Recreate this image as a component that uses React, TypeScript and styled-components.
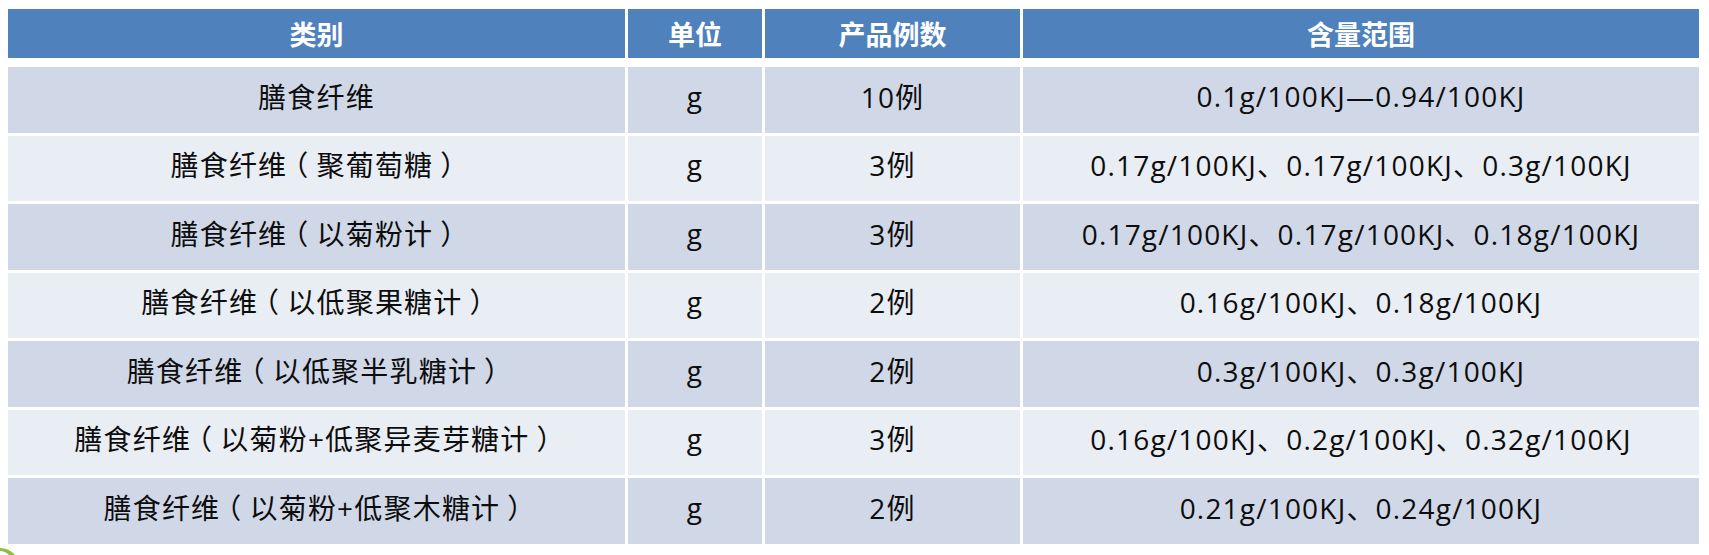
import React from "react";
import styled, { createGlobalStyle } from "styled-components";

const Global = createGlobalStyle`
  html, body { margin: 0; padding: 0; background: #ffffff; }
  body { width: 1709px; height: 555px; overflow: hidden; position: relative; }
`;

const Page = styled.div`
  padding: 9px 0 0 8px;
  font-family: "Open Sans", "Noto Sans CJK SC", sans-serif;
`;

const Table = styled.div`
  width: 1691px;
  display: grid;
  grid-template-columns: 617px 134px 255px 1fr;
  column-gap: 3px;
  row-gap: 3px;
`;

const HeadCell = styled.div`
  background: #4f81bd;
  height: 49px;
  margin-bottom: 6px;
  display: flex;
  align-items: center;
  justify-content: center;
  color: #ffffff;
  font-family: "Noto Sans CJK SC", sans-serif;
  font-weight: 700;
  font-size: 27px;
`;

const Cell = styled.div<{ $alt: boolean }>`
  background: ${(p) => (p.$alt ? "#e9edf4" : "#d0d8e8")};
  height: 65.5px;
  box-sizing: border-box;
  padding-bottom: 8px;
  display: flex;
  align-items: center;
  justify-content: center;
  color: #0d0d0d;
  font-size: 28px;
  letter-spacing: 1.2px;
  white-space: nowrap;
`;

const Paren = styled.span`
  font-family: "Noto Sans CJK SC", sans-serif;
  font-feature-settings: "halt";
  padding: 0 0.25em;
`;

const Leaf = styled.svg`
  position: absolute;
  left: 0;
  bottom: 0;
`;

const headers = ["类别", "单位", "产品例数", "含量范围"];

const rows: string[][] = [
  ["膳食纤维", "g", "10例", "0.1g/100KJ—0.94/100KJ"],
  ["膳食纤维（聚葡萄糖）", "g", "3例", "0.17g/100KJ、0.17g/100KJ、0.3g/100KJ"],
  ["膳食纤维（以菊粉计）", "g", "3例", "0.17g/100KJ、0.17g/100KJ、0.18g/100KJ"],
  ["膳食纤维（以低聚果糖计）", "g", "2例", "0.16g/100KJ、0.18g/100KJ"],
  ["膳食纤维（以低聚半乳糖计）", "g", "2例", "0.3g/100KJ、0.3g/100KJ"],
  ["膳食纤维（以菊粉+低聚异麦芽糖计）", "g", "3例", "0.16g/100KJ、0.2g/100KJ、0.32g/100KJ"],
  ["膳食纤维（以菊粉+低聚木糖计）", "g", "2例", "0.21g/100KJ、0.24g/100KJ"],
];

function renderText(t: string) {
  return t.split(/([（）])/).map((part, k) =>
    part === "（" || part === "）" ? (
      <Paren key={k}>{part}</Paren>
    ) : (
      <React.Fragment key={k}>{part}</React.Fragment>
    )
  );
}

export default function App() {
  return (
    <>
      <Global />
      <Page>
        <Table>
          {headers.map((h) => (
            <HeadCell key={h}>{h}</HeadCell>
          ))}
          {rows.map((r, i) =>
            r.map((c, j) => (
              <Cell key={`${i}-${j}`} $alt={i % 2 === 1}>
                <span>{renderText(c)}</span>
              </Cell>
            ))
          )}
        </Table>
      </Page>
      <Leaf width="20" height="10" viewBox="0 0 20 10">
        <path d="M0 3 Q9 3 15 10 L9 10 Q5 6 0 6 Z" fill="#8cbf3f" />
      </Leaf>
    </>
  );
}
